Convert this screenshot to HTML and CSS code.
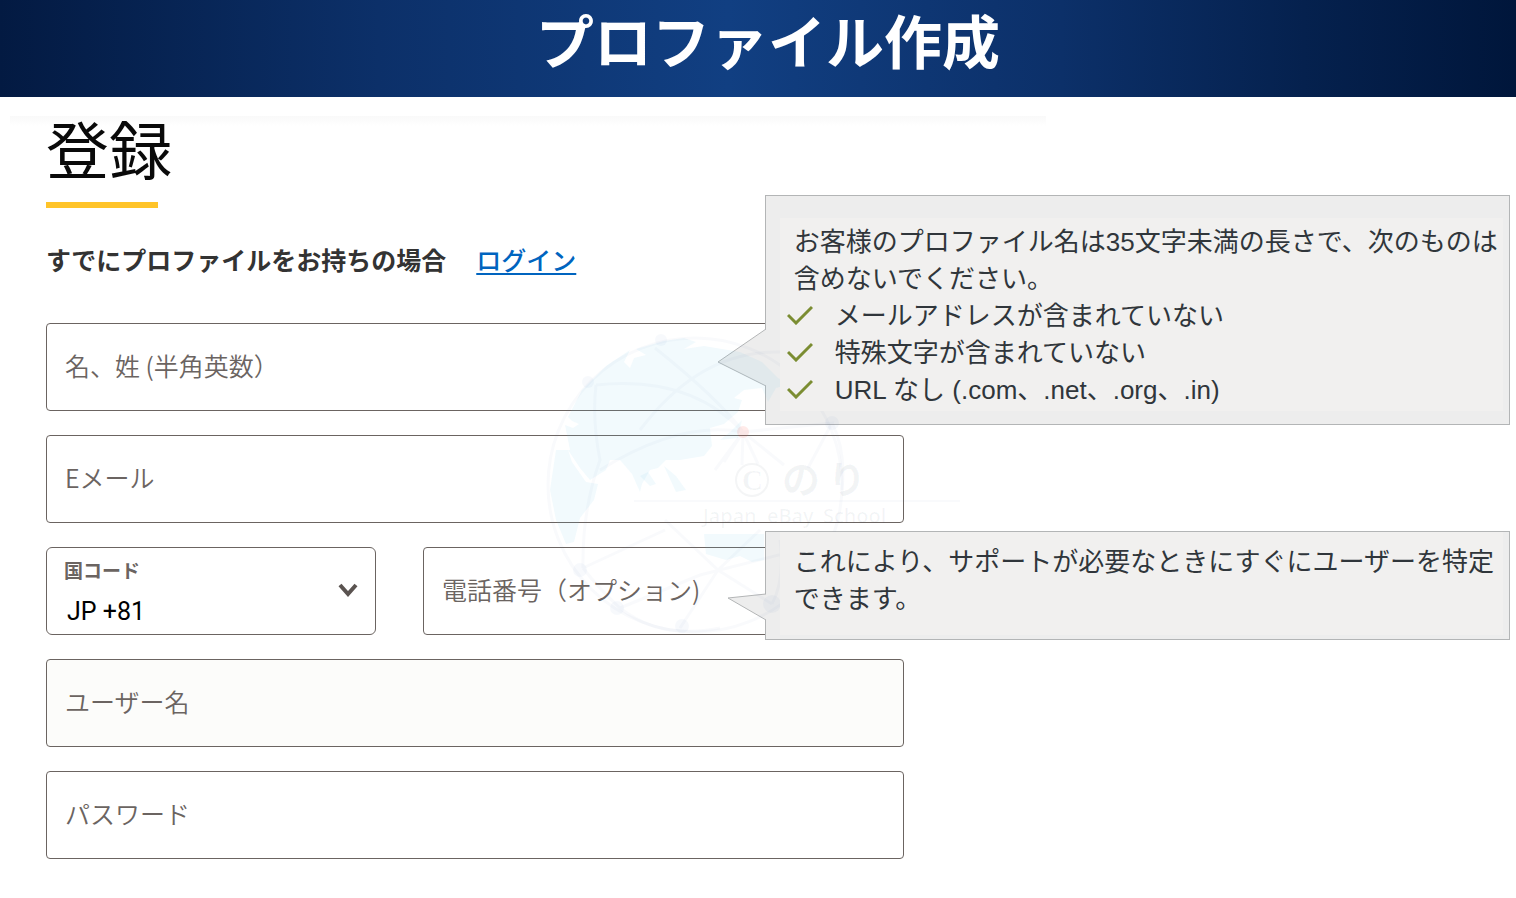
FILE: index.html
```html
<!DOCTYPE html>
<html lang="ja">
<head>
<meta charset="utf-8">
<title>プロファイル作成</title>
<meta name="viewport" content="width=device-width, initial-scale=1">
<link rel="stylesheet" href="styles.css">
</head>
<body>
<header class="banner">
  <h1 class="banner-title">プロファイル作成</h1>
</header>
<main class="page">
  <h2 class="heading">登録</h2>
  <p class="signin"><span>すでにプロファイルをお持ちの場合</span><a href="#">ログイン</a></p>
  <form class="form">
    <div class="row">
      <div class="fields">
        <input class="box" type="text" placeholder="名、姓 (半角英数）" aria-label="名、姓 (半角英数）">
      </div>
      <aside class="tip tip-name">
        <svg class="tail" width="50" height="59" viewBox="0 0 50 59" aria-hidden="true"><path d="M49 1 1 34 49 58"/></svg>
        <div class="tip-body">
          <p class="tip-text">お客様のプロファイル名は35文字未満の長さで、次のものは含めないでください。</p>
          <ul class="checks">
            <li><svg class="check" viewBox="0 0 26 20" aria-hidden="true"><path d="M1 10 9 18 25 2"/></svg>メールアドレスが含まれていない</li>
            <li><svg class="check" viewBox="0 0 26 20" aria-hidden="true"><path d="M1 10 9 18 25 2"/></svg>特殊文字が含まれていない</li>
            <li><svg class="check" viewBox="0 0 26 20" aria-hidden="true"><path d="M1 10 9 18 25 2"/></svg>URL なし (.com、.net、.org、.in)</li>
          </ul>
        </div>
      </aside>
    </div>
    <div class="row">
      <div class="fields">
        <input class="box" type="email" placeholder="Eメール" aria-label="Eメール">
      </div>
    </div>
    <div class="row">
      <div class="fields">
        <div class="country">
          <label class="country-label" for="country">国コード</label>
          <select class="box country-select" id="country"><option>JP +81</option></select>
          <svg class="chevron" viewBox="0 0 20 14" aria-hidden="true"><path d="M2 2 10 11 18 2"/></svg>
        </div>
        <input class="box phone" type="tel" placeholder="電話番号（オプション)" aria-label="電話番号（オプション)">
      </div>
      <aside class="tip tip-phone">
        <svg class="tail" width="40" height="28" viewBox="0 0 40 28" aria-hidden="true"><path d="M39 1 1 5 39 27"/></svg>
        <div class="tip-body">
          <p class="tip-text">これにより、サポートが必要なときにすぐにユーザーを特定できます。</p>
        </div>
      </aside>
    </div>
    <div class="row">
      <div class="fields">
        <input class="box shaded" type="text" placeholder="ユーザー名" aria-label="ユーザー名">
      </div>
    </div>
    <div class="row">
      <div class="fields">
        <input class="box" type="password" placeholder="パスワード" aria-label="パスワード">
      </div>
    </div>
    <svg class="mark" width="430" height="310" viewBox="540 330 430 310" aria-hidden="true">
      <g class="land">
        <path d="M565 425 573 428 579 424 572 421 568 417 582 390 606 366 630 350 624 362 630 368 634 358 646 355 636 349 664 341 684 338 696 342 684 349 704 346 740 352 762 362 778 378 790 384 776 388 768 402 762 388 744 390 734 398 742 400 738 412 724 424 710 428 712 446 704 456 680 460 666 460 658 468 650 470 642 484 640 492 632 474 620 460 606 460 592 448 610 460 606 470 590 480 580 468 568 450 572 462 586 482 598 484 594 500 580 518 574 542 566 544 556 520 550 490 556 450 570 450Z"/>
        <path d="M704 534H764V560L752 562 740 556 726 560 706 554Z"/>
        <path d="M640 476 648 472 656 484 650 486ZM664 466 676 476 686 490 676 492ZM720 440 730 432 742 420 738 438Z"/>
      </g>
      <g class="net">
        <circle cx="695" cy="485" r="147"/>
        <path d="M596 385Q690 375 743 432M600 470Q680 420 743 432M655 348Q720 400 743 432M640 430Q700 350 780 352M743 432 715 470M743 432 724 462M743 432 742 465M743 432 758 464M743 432 784 465M743 432 832 423 808 468M832 423Q846 450 842 490M583 568 665 530M583 568Q582 510 600 460 592 420 596 385M583 568Q600 590 620 608 660 640 720 628M665 520 718 570 772 604M620 608 700 575 830 542M718 570 680 628M718 570 760 530M780 540Q785 580 772 604M832 542 800 600"/>
        <path class="rule" d="M634 501H960"/>
      </g>
      <g class="nodes">
        <circle cx="832" cy="423" r="7"/><circle cx="832" cy="540" r="7"/><circle cx="772" cy="604" r="9"/><circle cx="580" cy="570" r="7"/><circle cx="617" cy="608" r="7"/><circle cx="682" cy="626" r="7"/><circle cx="661" cy="340" r="6"/><circle cx="588" cy="382" r="6"/>
      </g>
      <circle class="hub" cx="743" cy="432" r="6"/>
      <g class="mark-text">
        <circle class="mark-ring" cx="752" cy="480" r="16"/>
        <text class="mark-c" x="742" y="490">C</text><text class="mark-name" x="782" y="493">の</text><text class="mark-name" x="828" y="493">り</text>
        <text class="mark-sub" x="703" y="523">Japan</text><text class="mark-sub" x="767" y="523">eBay</text><text class="mark-sub" x="823" y="523">School</text>
      </g>
    </svg>
  </form>
</main>
</body>
</html>
```

FILE: styles.css
```css
* { box-sizing: border-box; }
body {
  margin: 0;
  background: #fff;
  color: #333;
  font-family: "Noto Sans CJK JP", sans-serif;
}
.banner {
  height: 97px;
  padding-left: 20px;
  background: linear-gradient(90deg, #031a42 0%, #0c3069 25%, #113f82 48%, #0c3069 70%, #05214e 86%, #00163b 100%);
  text-align: center;
}
.banner-title {
  margin: 0;
  color: #fff;
  font-size: 58px;
  font-weight: 700;
  line-height: 78px;
}
.page {
  padding: 19px 6px 36px 46px;
  background: linear-gradient(#f9f9f9, #fff) no-repeat 10px 19px / 1036px 10px;
}
.heading {
  display: flex;
  flex-direction: column;
  margin: 0;
  color: #0a0a0a;
  font-size: 63px;
  font-weight: 400;
  line-height: 62px;
}
.heading::after {
  content: "";
  width: 112px;
  height: 6px;
  margin-top: 24px;
  background: #ffc429;
}
.signin {
  display: flex;
  gap: 30px;
  margin: 32px 0 45px;
  font-size: 25px;
  font-weight: 700;
  line-height: 38px;
}
.signin a {
  color: #0064bf;
  font-weight: 500;
  text-decoration-thickness: 2px;
  text-underline-offset: 3px;
}
.form {
  position: relative;
  display: flex;
  flex-direction: column;
  gap: 24px;
}
.row { position: relative; }
.fields {
  display: flex;
  gap: 47px;
  width: 58.6%;
}
.box {
  flex: 1;
  min-width: 0;
  width: 100%;
  height: 88px;
  padding: 0 18px 5px;
  border: 1px solid #6b6461;
  border-radius: 4px;
  background: #fff;
  color: #000;
  font: 350 25px "Noto Sans CJK JP", sans-serif;
}
.box::placeholder { color: #6b6461; opacity: 1; }
.shaded { background: #fcfcfa; }
.country {
  position: relative;
  flex: 0 0 330px;
}
.country-label {
  position: absolute;
  top: 9px;
  left: 18px;
  color: #6b6461;
  font-size: 19px;
  font-weight: 700;
  line-height: 28px;
}
.country-select {
  appearance: none;
  padding: 40px 20px 0;
  border-radius: 6px;
  font: 400 25px Roboto, sans-serif;
}
.chevron {
  position: absolute;
  top: 36px;
  right: 18px;
  width: 20px;
  fill: none;
  stroke: #5a5350;
  stroke-width: 4;
  pointer-events: none;
}
.tip {
  position: absolute;
  left: 49.1%;
  right: 0;
  border: 1px solid #b3b5b6;
  background: #ededed;
}
.tip-name { top: -128px; padding: 22px 6px 13px 14px; }
.tip-phone { top: -16px; padding: 0 6px 4px 14px; }
.tail {
  position: absolute;
  right: 100%;
  margin-right: -1px;
  fill: #ededed;
  stroke: #b3b5b6;
}
.tip-name .tail { top: 132px; }
.tip-phone .tail { top: 61px; }
.tip-body {
  position: relative;
  z-index: 2;
  background: #f1f0ef;
  color: #30363b;
  font-family: "Liberation Sans", "Noto Sans CJK JP", sans-serif;
  font-size: 26px;
  line-height: 37px;
}
.tip-name .tip-body { padding: 6px 0 2px; }
.tip-phone .tip-body { padding: 12px 0 17px; }
.tip-text { margin: 0; padding-left: 14px; }
.checks { margin: 0; padding: 0; list-style: none; }
.checks li {
  display: flex;
  align-items: center;
  gap: 22px;
  padding-left: 7px;
}
.check {
  width: 26px;
  height: 20px;
  margin-bottom: 4px;
  fill: none;
  stroke: #7b8d32;
  stroke-width: 3;
}
.mark {
  position: absolute;
  z-index: 1;
  top: 7px;
  left: 494px;
  pointer-events: none;
}
.land { fill: rgba(110, 200, 230, .09); }
.net { fill: none; stroke: rgba(90, 140, 190, .04); stroke-width: 3; }
.rule { stroke-width: 2; }
.nodes { fill: rgba(90, 140, 190, .05); }
.hub { fill: rgba(255, 90, 70, .12); }
.mark-text { fill: rgba(60, 80, 100, .06); font-weight: 700; }
.mark-ring { fill: none; stroke: rgba(60, 80, 100, .06); stroke-width: 2; }
.mark-c { font-family: "Liberation Serif", serif; font-size: 29px; }
.mark-name { font-size: 38px; }
.mark-sub { font-family: "Noto Sans", sans-serif; font-size: 20px; font-weight: 500; }
```
